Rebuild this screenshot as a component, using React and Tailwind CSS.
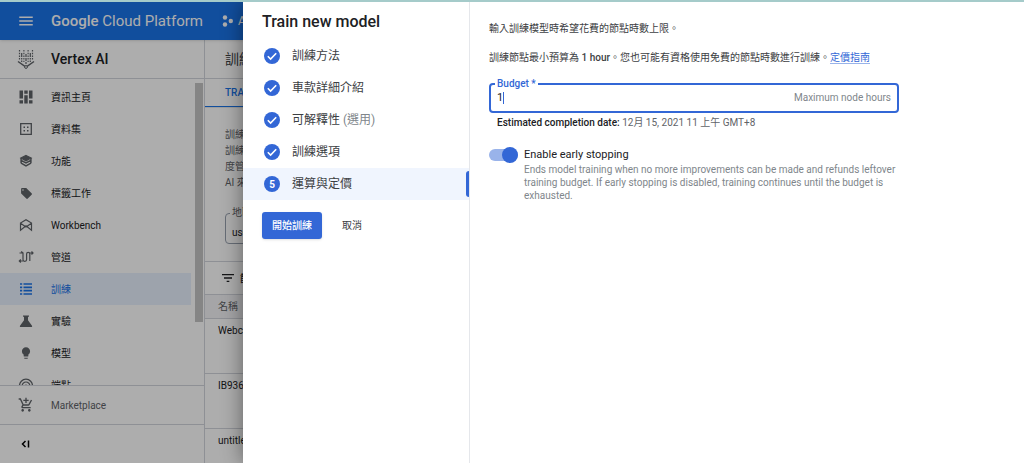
import React, { useState } from 'react';
import { MdAddShoppingCart, MdFilterList, MdLightbulb, MdLocalOffer, MdMenu } from 'react-icons/md';

const font = "font-['Roboto','Noto_Sans_CJK_TC',sans-serif]";

function Icon({ children, className = 'size-4' }) {
  return (
    <svg viewBox="0 0 16 16" className={`${className} shrink-0`} fill="none" stroke="currentColor" strokeWidth="1.3" aria-hidden="true">
      {children}
    </svg>
  );
}

function VertexIcon() {
  return (
    <svg viewBox="0 0 18 20" className="h-5 w-[18px] shrink-0 text-[#5f6368]" fill="none" stroke="currentColor" aria-hidden="true">
      <path d="M1 12.500 9 18l8-5.500" strokeWidth="1.500" />
      <circle cx="9" cy="18" r="1.400" fill="#fff" strokeWidth="1" />
      <path d="M2.500 1v10M15.500 1v10" strokeWidth="1.200" strokeDasharray="1.5 1.2" />
      <path d="M4.700 4v9M13.300 4v9" strokeWidth="1.200" strokeDasharray="4 1 1.500 1" />
      <path d="M6.900 1v12M11.100 1v12" strokeWidth="1.100" strokeDasharray="1.500 1.200" />
      <path d="M9 5v10" strokeWidth="1.200" strokeDasharray="3 1" />
    </svg>
  );
}

const menu = [
  {
    label: '資訊主頁',
    icon: (
      <Icon>
        <path d="M1.500 1.500h3.500v8H1.500zM1.500 11.200H5v3.300H1.500zM6.300 1.500h3.400v3.200H6.300zM6.300 6.300h3.400v8.200H6.300zM11 1.500h3.500v8H11zM11 11.200h3.500v3.300H11z" fill="currentColor" stroke="none" />
      </Icon>
    ),
  },
  {
    label: '資料集',
    icon: (
      <Icon>
        <path d="M2.700 2.700h10.600v10.600H2.700z" />
        <path d="M5.500 5.500h1.500V7H5.500zM9 5.500h1.500V7H9zM5.500 9h1.500v1.500H5.500zM9 9h1.500v1.500H9z" fill="currentColor" stroke="none" />
      </Icon>
    ),
  },
  {
    label: '功能',
    icon: (
      <Icon>
        <path d="M8 2.500 13 5 8 7.700 3 5z" fill="currentColor" />
        <path d="M3.100 7.300 8 10l4.900-2.700M3.100 10.200 8 13l4.900-2.800M3.100 5v5.200M12.900 5v5.200" strokeWidth="1.500" />
      </Icon>
    ),
  },
  { label: '標籤工作', icon: <MdLocalOffer className="size-[13px]" /> },
  {
    label: 'Workbench',
    icon: (
      <Icon>
        <path d="M2.500 13.200V6L8 2.800 13.500 6v7.200L8 8.800zM2.500 6.200 8 10l5.500-3.800" strokeWidth="1.200" />
      </Icon>
    ),
  },
  {
    label: '管道',
    icon: (
      <Icon>
        <path d="M1.500 4H5v6.500a1.800 1.800 0 0 0 3.600 0V5a1.600 1.600 0 0 1 3.200 0v7M2 12h3M3.200 2.500 5 4M11.500 4H15M13.500 2.500 15 4l-1.500 1.500M2.800 10.500 1.300 12l1.500 1.500" strokeWidth="1.200" />
      </Icon>
    ),
  },
  {
    label: '訓練',
    icon: (
      <Icon>
        <path d="M2 3h2.200M5.500 3h8.500M2 6.300h2.200M5.500 6.300h8.500M2 9.600h2.200M5.500 9.600h8.500M2 13h2.200M5.500 13h8.500" strokeWidth="1.700" />
      </Icon>
    ),
  },
  {
    label: '實驗',
    icon: (
      <Icon>
        <path d="M5 2.500h6v1.200h-1v3.500l4 5.500c.4.700 0 1.300-.7 1.300H2.700c-.7 0-1.100-.600-.7-1.300l4-5.500V3.700H5z" fill="currentColor" stroke="none" />
      </Icon>
    ),
  },
  { label: '模型', icon: <MdLightbulb className="size-[14px]" /> },
  {
    label: '端點',
    icon: (
      <Icon>
        <path d="M3.600 13.500a6.500 6.500 0 1 1 8.800 0M5.300 11.500a3.800 3.800 0 1 1 5.400 0" />
        <circle cx="8" cy="9" r="1.500" fill="currentColor" stroke="none" />
      </Icon>
    ),
  },
];

const jobs = ['Webca', 'IB936', 'untitled'];

const steps = [
  { label: '訓練方法', done: true },
  { label: '車款詳細介紹', done: true },
  { label: '可解釋性', note: '(選用)', done: true },
  { label: '訓練選項', done: true },
  { label: '運算與定價', done: false },
];

function menuRow(active) {
  const base = 'flex h-8 items-center gap-[17px] pl-[18px] text-[10px] whitespace-nowrap';
  return active ? `${base} bg-[#e8f0fe] text-[#1a73e8]` : `${base} text-[#202124]`;
}

function Sidebar() {
  return (
    <aside className="flex w-[205px] shrink-0 flex-col border-r border-gray-300">
      <div className="flex h-[39px] shrink-0 items-center gap-4 border-b border-gray-300 pl-[17px]">
        <VertexIcon />
        <h2 className="text-[14px] font-medium text-[#202124]">Vertex AI</h2>
      </div>
      <div className="flex min-h-0 flex-1 overflow-hidden pt-0.5">
        <nav className="min-w-0 flex-1">
          {menu.map((item) => {
            const active = item.label === '訓練';
            return (
              <a key={item.label} href="#" className={menuRow(active)}>
                <span className={active ? 'flex w-4 shrink-0 justify-center' : 'flex w-4 shrink-0 justify-center text-[#5f6368]'}>
                  {item.icon}
                </span>
                {item.label}
              </a>
            );
          })}
        </nav>
        <div className="mt-0.5 mr-px ml-1 h-[239px] w-2 bg-[#c4c4c4]" />
      </div>
      <a href="#" className="flex h-10 shrink-0 items-center gap-[17px] border-y border-gray-300 pl-[18px] text-[10px] text-[#5f6368]">
        <MdAddShoppingCart className="size-4" />
        Marketplace
      </a>
      <button className="flex h-[38px] shrink-0 items-center pl-[18px] text-black" aria-label="Collapse menu">
        <Icon>
          <path d="M7.500 5 4.500 8l3 3M10.500 4.500v7" strokeWidth="1.500" />
        </Icon>
      </button>
    </aside>
  );
}

function TrainingPage() {
  return (
    <main className="min-w-0 flex-1 overflow-hidden">
      <h1 className="flex h-[39px] items-center border-b border-gray-300 pl-5 text-[14px] text-[#3c4043]">訓練</h1>
      <div className="flex h-[29px] items-end border-b border-gray-200 text-[10px] font-medium">
        <button className="h-[29px] border-b border-[#1a73e8] px-5 text-[#1a73e8]">TRAIN</button>
      </div>
      <div className="px-5 pt-[19px]">
        <p className="text-[10px] leading-4 text-[#5f6368]">
          訓練管<br />訓練模<br />度管理<br />AI 來進
        </p>
        <fieldset className="mt-[16px] h-[37px] w-40 rounded border border-gray-400 px-1">
          <legend className="px-0.5 text-[10px] leading-3 text-[#5f6368]">
            <label htmlFor="region">地區</label>
          </legend>
          <select id="region" className="w-full appearance-none px-0.5 text-[10px] leading-4 text-[#202124]">
            <option>us-central1</option>
          </select>
        </fieldset>
      </div>
      <div className="mt-[17px] flex h-[33px] items-center gap-1 border-t border-gray-300 pl-[15px] text-[10px] font-medium text-[#202124]">
        <MdFilterList className="size-4" />
        篩選
      </div>
      <table className="w-full text-left text-[10px] text-[#202124]">
        <thead>
          <tr className="h-6 border-y border-gray-300 bg-gray-100 text-[10px] text-[#5f6368]">
            <th className="pl-[13px] font-normal">名稱</th>
          </tr>
        </thead>
        <tbody>
          {jobs.map((name) => (
            <tr key={name} className="h-[55px] border-b border-gray-300 align-top">
              <td className="pt-1 pl-[13px] leading-4">{name}</td>
            </tr>
          ))}
        </tbody>
      </table>
    </main>
  );
}

function StepBadge({ step, number }) {
  if (step.done) {
    return (
      <svg viewBox="0 0 16 16" className="size-4 shrink-0" aria-hidden="true">
        <circle cx="8" cy="8" r="8" fill="#3367d6" />
        <path d="m3.800 8.300 2.800 2.800 5.600-5.800" fill="none" stroke="#fff" strokeWidth="1.600" />
      </svg>
    );
  }
  return (
    <span className="flex size-4 shrink-0 items-center justify-center rounded-full bg-[#3367d6] text-[10px] font-bold text-white">
      {number}
    </span>
  );
}

function Stepper() {
  return (
    <div className="w-[227px] shrink-0 border-r border-gray-200">
      <h2 className="h-[38px] pt-2 pl-[19px] text-[16px] leading-6 font-medium text-[#202124]">Train new model</h2>
      <ol>
        {steps.map((step, i) => (
          <li key={step.label} className={step.done ? 'flex' : 'flex items-center bg-[#f0f5fe]'}>
            <button className="flex h-8 flex-1 items-center gap-3 pl-[21px] text-[12px] text-[#3c4043]">
              <StepBadge step={step} number={i + 1} />
              <span>
                {step.label} {step.note && <span className="text-[#80868b]">{step.note}</span>}
              </span>
            </button>
            {!step.done && <span className="h-[26px] w-[3px] rounded-l bg-[#3367d6]" />}
          </li>
        ))}
      </ol>
      <div className="mt-3 flex items-center gap-5 pl-[19px] text-[10px]">
        <button className="h-[27px] rounded-[3px] bg-[#3367d6] px-2.5 font-medium text-white shadow">開始訓練</button>
        <button className="h-[27px] text-[#3c4043]">取消</button>
      </div>
    </div>
  );
}

function BudgetForm() {
  const [budget, setBudget] = useState('1');
  const [early, setEarly] = useState(true);

  return (
    <div className="min-w-0 flex-1 px-[19px] pt-[19px] text-[10px] text-[#3c4043]">
      <p className="leading-4">輸入訓練模型時希望花費的節點時數上限。</p>
      <p className="mt-[13px] leading-4">
        訓練節點最小預算為 <span className="font-medium">1 hour</span>。您也可能有資格使用免費的節點時數進行訓練。
        <a href="#" className="border-b border-[#99b3ea] text-[#3367d6]">定價指南</a>
      </p>

      <fieldset className="mt-3 h-[35px] max-w-[410px] rounded border-2 border-[#3367d6] px-1">
        <legend className="px-0.5 text-[10px] leading-3 font-medium text-[#3367d6]">
          <label htmlFor="budget">Budget *</label>
        </legend>
        <div className="relative flex items-center px-0.5 leading-4">
          <input
            id="budget"
            value={budget}
            onChange={(e) => setBudget(e.target.value)}
            className="min-w-0 flex-1 text-[11px] text-[#202124] outline-none"
          />
          <span className="absolute left-2 h-3 w-px bg-[#3367d6]" />
          <span className="text-[#80868b]">Maximum node hours</span>
        </div>
      </fieldset>
      <p className="mt-0.5 pl-2 leading-4 text-[#5f6368]">
        <span className="font-medium text-[#202124]">Estimated completion date:</span> 12月 15, 2021 11 上午 GMT+8
      </p>

      <div className="mt-4 flex gap-1.5">
        <input
          id="early"
          type="checkbox"
          role="switch"
          checked={early}
          onChange={(e) => setEarly(e.target.checked)}
          className="mt-0.5 flex h-3 w-[29px] shrink-0 appearance-none items-center rounded-full bg-[#99b3ea] before:size-4 before:rounded-full before:bg-[#3367d6] checked:justify-end"
        />
        <div>
          <label htmlFor="early" className="block text-[11px] leading-4 text-[#202124]">Enable early stopping</label>
          <p className="max-w-[380px] leading-[13px] text-[#80868b]">
            Ends model training when no more improvements can be made and refunds leftover training budget. If early stopping is disabled, training continues until the budget is exhausted.
          </p>
        </div>
      </div>
    </div>
  );
}

export default function App() {
  return (
    <div className={`flex h-screen flex-col border-t-2 border-[#a5cbca] bg-white ${font}`}>
      <div className="relative flex min-h-0 flex-1 flex-col overflow-hidden">
        <header className="z-0 flex h-[38px] shrink-0 items-center bg-[#1a73e8] pl-[17px] text-white shadow">
          <button aria-label="Menu"><MdMenu className="size-[18px]" /></button>
          <span className="ml-4 text-[15px] whitespace-nowrap">
            <span className="font-medium">Google</span> Cloud Platform
          </span>
          <button className="ml-[19px] flex items-center gap-1 text-[12px]">
            <svg viewBox="0 0 12 12" className="size-3" fill="currentColor" aria-hidden="true">
              <circle cx="3" cy="2.500" r="2.200" />
              <circle cx="3" cy="9.500" r="2.200" />
              <circle cx="8.800" cy="6" r="2.200" />
            </svg>
            AI
          </button>
        </header>
        <div className="flex min-h-0 flex-1">
          <Sidebar />
          <TrainingPage />
        </div>

        <div className="absolute inset-0 bg-black/32" />
        <section className="absolute inset-y-0 right-0 left-[243px] flex bg-white shadow-[0_0_20px_rgba(0,0,0,0.45)]">
          <Stepper />
          <BudgetForm />
        </section>
      </div>
    </div>
  );
}
